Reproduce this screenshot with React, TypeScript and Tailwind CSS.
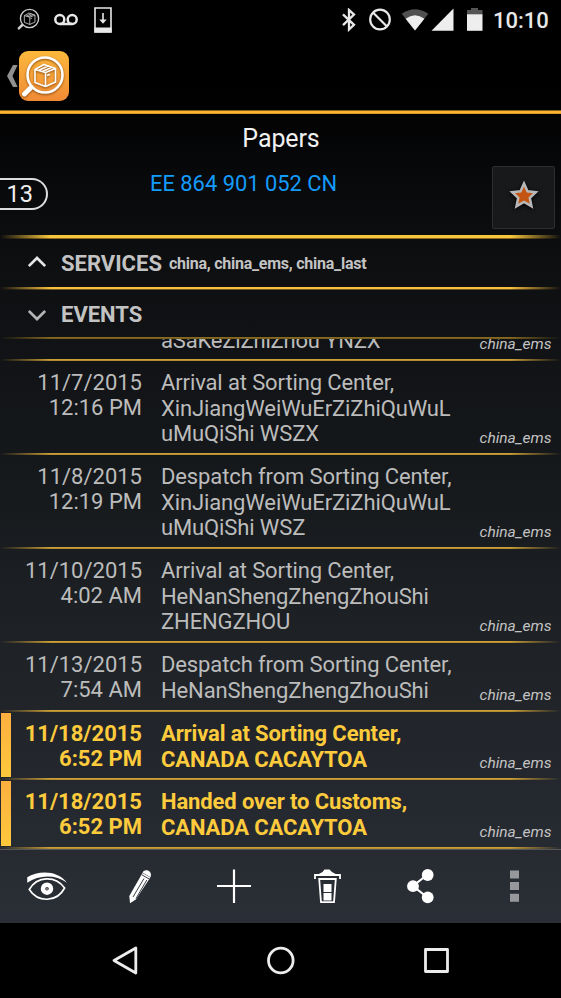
import React from "react";

const FADE =
  "[mask-image:linear-gradient(to_right,transparent,black_9%,black_91%,transparent)]";
const THIN_LINE = `h-[2px] shrink-0 bg-[linear-gradient(#d9aa38,#a8842f)] ${FADE}`;

function PackageGlass({ className }: { className: string }) {
  return (
    <svg viewBox="0 0 50 50" className={className} fill="none" stroke="currentColor">
      <circle cx="26" cy="24" r="17.500" strokeWidth="2.600" />
      <path d="M13.500 36.500 10 40" strokeWidth="2.400" />
      <path d="m12 36.500-6.500 6.500" strokeWidth="4.800" strokeLinecap="round" />
      <path
        d="M16 18.500 26.500 21.500V35.500L16 31.500ZM26.500 21.500 36.500 17.500V31L26.500 35.500M16 18.500 25 13.500 36.500 17.500M20 19.300 29.500 14.800M23.300 20.500 33 16.200M28 24.500l3-1.200"
        strokeWidth="1.600"
        strokeLinejoin="round"
      />
    </svg>
  );
}

function StatusBar() {
  return (
    <div className="flex h-10 shrink-0 items-center pl-4 text-[#e8e8e8]">
      <PackageGlass className="mb-[2px] h-[26px] w-[26px] text-[#cfcfcf] [stroke-width:3]" />
      <svg className="ml-[12px] h-[14px] w-6" viewBox="0 0 24 14" fill="none" stroke="currentColor" strokeWidth="2.500">
        <circle cx="5.800" cy="6.500" r="4.500" />
        <circle cx="18.200" cy="6.500" r="4.500" />
        <path d="M6 11h12" />
      </svg>
      <svg className="ml-4 h-[26px] w-[18px]" viewBox="0 0 18 26" fill="none" stroke="currentColor">
        <path d="M1 1h16v24H1z" strokeWidth="1.600" />
        <path d="M1 21h16v4H1z" fill="currentColor" strokeWidth="1.200" />
        <path d="M9 6v8" strokeWidth="1.600" />
        <path d="M5.300 12.500h7.400L9 16.800z" fill="currentColor" stroke="none" />
      </svg>
      <svg className="ml-[229px] h-6 w-[15px]" viewBox="0 0 15 24" fill="none" stroke="currentColor" strokeWidth="2.300">
        <path d="m2 6.300 11 10.500-5 4.700V2l5 4.600-11 10.500" />
      </svg>
      <svg className="ml-[12px] h-6 w-6" viewBox="0 0 24 24" fill="none" stroke="currentColor" strokeWidth="2.200">
        <circle cx="12" cy="11.500" r="9.800" />
        <path d="m5 4.500 14 14" />
      </svg>
      <svg className="ml-[9px] h-6 w-7" viewBox="0 0 28 24">
        <path d="M.7 5.800Q14-3.500 27.300 5.800L14 22.500Z" fill="#505050" />
        <path d="M4.600 10.800Q14 3.600 23.400 10.800L14 22.500Z" fill="#eee" />
      </svg>
      <svg className="ml-[2px] h-6 w-[23px]" viewBox="0 0 23 24">
        <path d="M22.500.5v22.300H.5z" fill="#eee" />
      </svg>
      <svg className="ml-[13px] h-6 w-4" viewBox="0 0 16 24">
        <path d="M0 2h4V0h7v2h4.500v5H0z" fill="#555" />
        <path d="M0 6.300h15.500v16.500H0z" fill="#eee" />
      </svg>
      <span className="ml-[10px] pt-px text-[22px] font-medium leading-none">10:10</span>
    </div>
  );
}

function AppBar() {
  return (
    <>
      <div className="flex h-[70px] shrink-0 items-center pl-[7px] pt-[2px]">
        <svg className="h-[22px] w-[11px]" viewBox="0 0 11 22">
          <path d="M6 0h4.600L5.500 11l5.100 11H6L0 11z" fill="#909090" />
        </svg>
        <div className="ml-px h-[50px] w-[50px] rounded-[9px] bg-gradient-to-b from-[#fbb83c] to-[#f08a35]">
          <PackageGlass className="h-[50px] w-[50px] text-white drop-shadow-[0_1px_1px_#8a4b10]" />
        </div>
      </div>
      <div className="h-[4px] shrink-0 bg-[linear-gradient(#8a611a_0_1px,#ffb52d_1px_3px,#d89a2c_3px)]" />
    </>
  );
}

function Summary() {
  return (
    <>
      <div className="flex h-[121px] shrink-0 flex-col">
        <h1 className="mt-[9px] pl-px text-center text-[25px] leading-8 tracking-[-0.1px]">Papers</h1>
        <div className="mt-[11px] flex h-[63px]">
          <div className="mt-[12px] flex h-8 w-[48px] items-center justify-end rounded-r-full border-2 border-l-0 border-[#ddd] pr-[13px] pt-[2px] text-[23.500px] leading-none">
            13
          </div>
          <div className="ml-[102px] mr-auto pt-[6px] text-[21.900px] leading-6 whitespace-nowrap text-[#159bfb]">
            EE 864 901 052 CN
          </div>
          <div className="mr-[6px] flex h-[63px] w-[63px] items-center justify-center rounded-[2px] border border-[#2c2d30] bg-[#18191b]">
            <svg className="mt-[-5px] h-9 w-9 drop-shadow-[0_1px_2px_#000]" viewBox="0 0 36 36">
              <path
                d="m18 6.500 3.500 7.800 8.300.9-6 5.700 1.700 8.300-7.500-4.200-7.500 4.200 1.700-8.300-6-5.700 8.300-.9z"
                fill="#c35412"
                stroke="#b8b8b8"
                strokeWidth="2.500"
              />
            </svg>
          </div>
        </div>
      </div>
      <div className={`h-[4px] shrink-0 bg-[linear-gradient(#f8c63c_0_3px,#8f6b20_3px)] ${FADE}`} />
    </>
  );
}

function Section({ title, note, open }: { title: string; note?: string; open: boolean }) {
  return (
    <div className={`flex shrink-0 items-center pl-7 font-bold text-[#c3c3c3] ${open ? "h-[48px]" : "h-[47px]"}`}>
      <svg className="h-5 w-[18px]" viewBox="0 0 18 20" fill="none" stroke={open ? "#e5e5e5" : "#b4b4b4"} strokeWidth="2.700">
        <path d={open ? "m.8 13 8.200-8 8.200 8" : "m.8 7 8.200 8 8.200-8"} />
      </svg>
      <span className="ml-[15px] pt-[2px] text-[22px] leading-none">{title}</span>
      {note && <span className="ml-[7px] pt-[2px] text-[16px] leading-none tracking-[-0.25px]">{note}</span>}
    </div>
  );
}

type Event = { date: string; time: string; lines: string[]; fresh?: boolean; height: string };

const events: Event[] = [
  { date: "11/7/2015", time: "12:16 PM", lines: ["Arrival at Sorting Center,", "XinJiangWeiWuErZiZhiQuWuL", "uMuQiShi WSZX"], height: "h-[94px]" },
  { date: "11/8/2015", time: "12:19 PM", lines: ["Despatch from Sorting Center,", "XinJiangWeiWuErZiZhiQuWuL", "uMuQiShi WSZ"], height: "h-[94px]" },
  { date: "11/10/2015", time: "4:02 AM", lines: ["Arrival at Sorting Center,", "HeNanShengZhengZhouShi", "ZHENGZHOU"], height: "h-[94px]" },
  { date: "11/13/2015", time: "7:54 AM", lines: ["Despatch from Sorting Center,", "HeNanShengZhengZhouShi"], height: "h-[69px]" },
  { date: "11/18/2015", time: "6:52 PM", lines: ["Arrival at Sorting Center,", "CANADA CACAYTOA"], fresh: true, height: "h-[68px]" },
  { date: "11/18/2015", time: "6:52 PM", lines: ["Handed over to Customs,", "CANADA CACAYTOA"], fresh: true, height: "h-[69px]" },
];

function Service() {
  return (
    <span className="ml-auto self-end pb-[6.500px] pr-[9.500px] text-[15.500px] font-normal italic leading-[18px] text-[#c3c3c3]">
      china_ems
    </span>
  );
}

function EventRow({ event }: { event: Event }) {
  return (
    <div className={`flex shrink-0 flex-col ${event.height}`}>
      <div className={`flex min-h-0 flex-1 ${event.fresh ? "font-bold text-[#fdcb3c]" : "text-[#bcbcbc]"}`}>
        <div className={`my-px ml-px w-[10px] ${event.fresh ? "bg-gradient-to-b from-[#fdaf40] to-[#fdc93b]" : ""}`} />
        <div className="w-[131px] pt-[10px] text-right text-[22px] leading-[24.500px]">
          {event.date}
          <br />
          {event.time}
        </div>
        <div className="ml-[19px] pt-[9px] text-[22px] leading-[25.500px] tracking-[-0.12px] whitespace-nowrap">
          {event.lines.map((line) => (
            <div key={line}>{line}</div>
          ))}
        </div>
        <Service />
      </div>
      <div className={THIN_LINE} />
    </div>
  );
}

function Toolbar() {
  return (
    <div className="flex h-[74px] shrink-0 items-center justify-around border-t border-[#55585a] bg-gradient-to-b from-[#272b31] to-[#2a2e36] pb-[2px] text-white">
      <svg className="h-10 w-10" viewBox="0 0 40 40" fill="none" stroke="currentColor">
        <path d="M.2 11.300C11 4.500 30 3.500 40 16.700 28 8 12 9 .3 16.700z" fill="currentColor" stroke="none" />
        <path d="M2.300 23.500C10 9.500 29 9.500 37.600 22 30 36.500 11 37 2.300 23.500Z" strokeWidth="1.700" />
        <circle cx="20" cy="22.700" r="4" strokeWidth="4.500" />
        <circle cx="20" cy="22.700" r="1.300" fill="#777" stroke="none" />
      </svg>
      <svg className="h-10 w-10" viewBox="0 0 40 40">
        <path d="m22.500 7 7.800 4.500-14.500 22L10 37.300 9.300 30z" fill="currentColor" />
        <path d="M22.500 6.500C25 2 33 5 30.500 11.200z" fill="currentColor" />
        <path d="M24 12.500 13 31M26.800 14 16 32.500M21.800 8.800l8 4.500" stroke="#3c4046" strokeWidth="1" />
      </svg>
      <svg className="h-10 w-10" viewBox="0 0 40 40" stroke="currentColor" strokeWidth="2.200">
        <path d="M20 3.500v33.500M3 20h34" />
      </svg>
      <svg className="h-10 w-10" viewBox="0 0 40 40" fill="none" stroke="currentColor">
        <path d="M8 13V9h25V13" strokeWidth="1.800" />
        <path d="M10 9 15.500 6 17.500 3.500h5L25 6l5.500 3z" fill="currentColor" stroke="none" />
        <path d="M12.200 13h16.600l-1.800 23.200h-13z" strokeWidth="1.800" />
        <path d="M16.500 18h8v8h-8zM16.500 27h8v7.500h-8z" fill="currentColor" stroke="none" />
      </svg>
      <svg className="h-10 w-10" viewBox="0 0 40 40" fill="currentColor">
        <path d="M26.500 8.500 12 20l14.500 11.500" fill="none" stroke="currentColor" strokeWidth="2.200" />
        <circle cx="26.700" cy="9" r="5.900" />
        <circle cx="12" cy="20.200" r="5.900" />
        <circle cx="26.700" cy="31.300" r="5.900" />
      </svg>
      <svg className="h-10 w-10" viewBox="0 0 40 40" fill="#96989b">
        <path d="M16 4.500h9v8h-9zM16 16h9v8h-9zM16 27.700h9v8h-9z" />
      </svg>
    </div>
  );
}

function NavBar() {
  return (
    <div className="flex h-[75px] shrink-0 items-center justify-center bg-black pb-px">
      <svg className="h-8 w-8" viewBox="0 0 32 32" fill="none" stroke="#ececec" strokeWidth="2.800" strokeLinejoin="round">
        <path d="M5 16.500 26.800 4v25z" />
      </svg>
      <svg className="mx-[124px] h-8 w-8" viewBox="0 0 32 32" fill="none" stroke="#ececec" strokeWidth="2.800">
        <circle cx="15.800" cy="16.500" r="12.300" />
      </svg>
      <svg className="h-8 w-8" viewBox="0 0 32 32" fill="none" stroke="#ececec" strokeWidth="2.800" strokeLinejoin="round">
        <path d="M4.500 5.500h22v22h-22z" />
      </svg>
    </div>
  );
}

export default function App() {
  return (
    <div className="flex h-[998px] w-[561px] flex-col overflow-hidden bg-[linear-gradient(#000_0_9%,#090a0c_19%,#0e0f11_27%,#111316_36%,#171a1d_50%,#1f2327_66%,#262a31_84%)] font-['Roboto',sans-serif] text-[#f0f0f0]">
      <StatusBar />
      <AppBar />
      <Summary />
      <Section title="SERVICES" note="china, china_ems, china_last" open />
      <div className={`h-[3px] shrink-0 bg-[linear-gradient(#f8c03c_0_2px,#6f5420_2px)] ${FADE}`} />
      <Section title="EVENTS" open={false} />
      <div className={`h-[2px] shrink-0 bg-[linear-gradient(#8f7120,#6e571c)] ${FADE}`} />
      <div className="flex h-[20px] shrink-0 items-end overflow-hidden text-[#bcbcbc]">
        <span className="ml-[161px] pb-[6.500px] text-[22px] leading-[25px] tracking-[-0.18px]">aSaKeZiZhiZhou YNZX</span>
        <Service />
      </div>
      <div className={THIN_LINE} />
      {events.map((event, i) => (
        <EventRow key={i} event={event} />
      ))}
      <Toolbar />
      <NavBar />
    </div>
  );
}
